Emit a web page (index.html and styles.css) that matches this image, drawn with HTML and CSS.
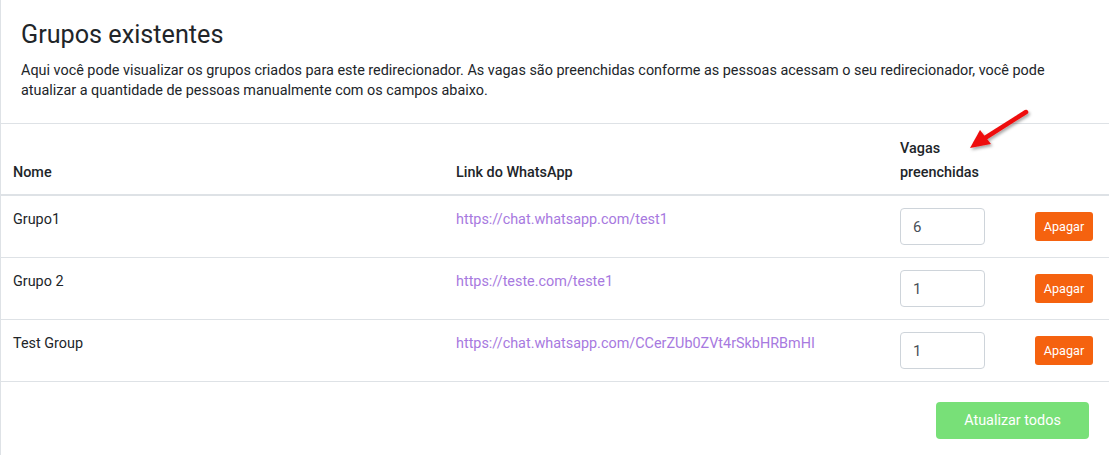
FILE: index.html
```html
<!DOCTYPE html>
<html lang="pt">
<head>
<meta charset="utf-8">
<title>Grupos existentes</title>
<link rel="stylesheet" href="styles.css">
</head>
<body>
<div class="card">
  <div class="card-header">
    <h3 class="title">Grupos existentes</h3>
    <p class="desc">Aqui você pode visualizar os grupos criados para este redirecionador. As vagas são preenchidas conforme as pessoas acessam o seu redirecionador, você pode atualizar a quantidade de pessoas manualmente com os campos abaixo.</p>
  </div>
  <table class="groups">
    <thead>
      <tr>
        <th class="col-name">Nome</th>
        <th class="col-link">Link do WhatsApp</th>
        <th class="col-vagas">Vagas preenchidas</th>
        <th class="col-act"></th>
      </tr>
    </thead>
    <tbody>
      <tr>
        <td>Grupo1</td>
        <td><a class="link" href="#">https://chat.whatsapp.com/test1</a></td>
        <td><input class="num" type="text" value="6"></td>
        <td><button class="btn-del">Apagar</button></td>
      </tr>
      <tr>
        <td>Grupo 2</td>
        <td><a class="link" href="#">https://teste.com/teste1</a></td>
        <td><input class="num" type="text" value="1"></td>
        <td><button class="btn-del">Apagar</button></td>
      </tr>
      <tr>
        <td>Test Group</td>
        <td><a class="link" href="#">https://chat.whatsapp.com/CCerZUb0ZVt4rSkbHRBmHI</a></td>
        <td><input class="num" type="text" value="1"></td>
        <td><button class="btn-del">Apagar</button></td>
      </tr>
    </tbody>
  </table>
  <div class="card-footer">
    <button class="btn-update">Atualizar todos</button>
  </div>
  <svg class="arrow" width="80" height="60" viewBox="0 0 80 60">
    <defs>
      <filter id="sh" x="-30%" y="-30%" width="160%" height="160%">
        <feDropShadow dx="1.5" dy="2" stdDeviation="1.5" flood-color="#000" flood-opacity="0.35"/>
      </filter>
    </defs>
    <g filter="url(#sh)">
      <line x1="65" y1="12" x2="24" y2="38" stroke="#ee1111" stroke-width="4.5" stroke-linecap="round"/>
      <polygon points="9,48 19,30 30,44" fill="#ee1111"/>
    </g>
  </svg>
</div>
</body>
</html>
```

FILE: styles.css
```css
* { box-sizing: border-box; }
html, body {
  margin: 0;
  padding: 0;
  background: #ffffff;
}
body {
  font-family: Roboto, "Liberation Sans", Arial, sans-serif;
  color: #212529;
  font-size: 14.4px;
}
.card {
  position: relative;
  border-left: 1px solid #dee2e6;
  min-height: 455px;
}
.card-header {
  padding: 20px 20px 22px 20px;
  border-bottom: 1px solid #dee2e6;
}
.title {
  margin: 0 0 11px 0;
  font-size: 25.2px;
  font-weight: 400;
  line-height: 30px;
  color: #212529;
}
.desc {
  margin: 0;
  font-size: 14.4px;
  line-height: 20px;
  color: #212529;
}
.groups {
  width: 100%;
  border-collapse: collapse;
  table-layout: fixed;
}
.groups th {
  text-align: left;
  font-weight: 500;
  vertical-align: bottom;
  padding: 13px 12px 9px 12px;
  line-height: 24px;
  border-bottom: 2px solid #dee2e6;
}
.col-name { width: 443px; }
.col-link { width: 444px; }
.col-vagas { width: 135px; }
.groups td {
  vertical-align: top;
  padding: 12px;
  line-height: 24px;
  border-bottom: 1px solid #dee2e6;
}
.link {
  color: #a779e0;
  text-decoration: none;
}
.num {
  display: block;
  width: 85px;
  height: 37px;
  padding: 6px 12px;
  border: 1px solid #ced4da;
  border-radius: 4px;
  font-family: inherit;
  font-size: 15px;
  color: #495057;
}
.btn-del {
  display: block;
  margin-top: 4px;
  width: 58px;
  height: 29px;
  padding: 0;
  background: #f5620f;
  border: none;
  border-radius: 3px;
  color: #ffffff;
  font-family: inherit;
  font-size: 12.6px;
}
.card-footer {
  display: flex;
  justify-content: flex-end;
  padding: 20px 20px 16px 20px;
}
.btn-update {
  width: 153px;
  height: 37px;
  background: #78e078;
  border: none;
  border-radius: 4px;
  color: #ffffff;
  font-family: inherit;
  font-size: 14.4px;
}
.arrow {
  position: absolute;
  left: 960px;
  top: 100px;
}
```
